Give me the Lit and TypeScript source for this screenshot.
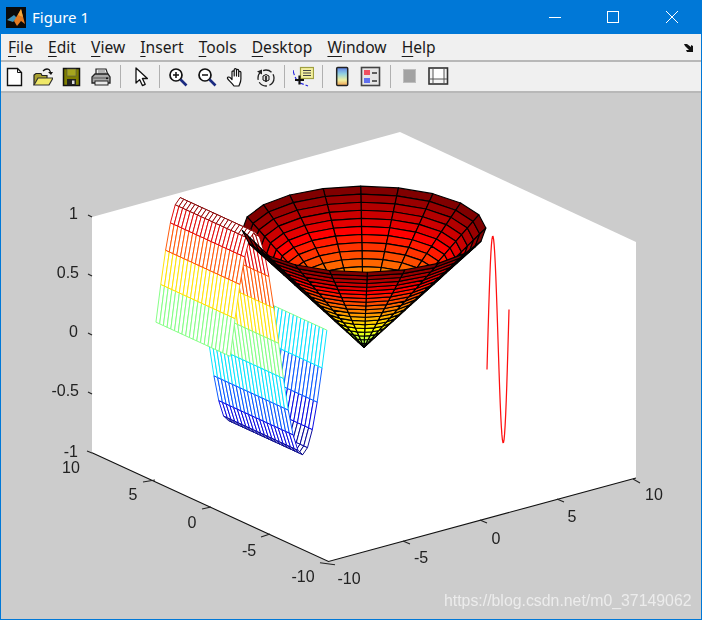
import { LitElement, html, css, svg } from "lit";
import { customElement } from "lit/decorators.js";

type V = [number, number, number];
const px = (v: V): [number, number] => [
  364 + 15.375 * v[0] - 11.825 * v[1],
  347.2 - 4.175 * v[0] - 5.44 * v[1] - 118 * v[2],
];
const depth = (v: V) => 18.1 * (0.61 * v[0] + 0.793 * v[1]) - 45.4 * v[2];
const clamp = (n: number) => Math.max(0, Math.min(1, n));
const jet = (z: number) => {
  const t = (z + 1) / 2;
  const r = clamp(Math.min(4 * t - 1.5, -4 * t + 4.5));
  const g = clamp(Math.min(4 * t - 0.5, -4 * t + 3.5));
  const b = clamp(Math.min(4 * t + 0.5, -4 * t + 2.5));
  return `rgb(${Math.round(r * 255)},${Math.round(g * 255)},${Math.round(b * 255)})`;
};
const pts = (vs: V[]) => vs.map((v) => px(v).map((n) => n.toFixed(2)).join(",")).join(" ");

interface Facet { d: number; t: unknown }
const N = 20;
const TAU = Math.PI * 2;

function buildFacets(): Facet[] {
  const out: Facet[] = [];
  // cone: z = r / 2pi
  const c = (i: number, j: number): V => {
    const r = (TAU * i) / N;
    const a = (TAU * j) / N;
    return [r * Math.cos(a), r * Math.sin(a), r / TAU];
  };
  for (let i = 0; i < N; i++) {
    for (let j = 0; j < N; j++) {
      const q: V[] = [c(i, j), c(i + 1, j), c(i + 1, j + 1), c(i, j + 1)];
      const d = q.reduce((s, v) => s + depth(v), 0) / 4;
      out.push({ d, t: svg`<polygon class="cone" points=${pts(q)} fill=${jet((i + 1) / N)}></polygon>` });
    }
  }
  // wave mesh: z = sin(x), x in [-2pi, 0], y in [pi, 3pi]
  const w = (i: number, j: number): V => {
    const x = -TAU + (TAU * i) / N;
    const y = Math.PI + (TAU * j) / N;
    return [x, y, Math.sin(x)];
  };
  for (let i = 0; i < N; i++) {
    for (let j = 0; j < N; j++) {
      const a = w(i, j), b = w(i + 1, j), e = w(i + 1, j + 1), f = w(i, j + 1);
      const d = [a, b, e, f].reduce((s, v) => s + depth(v), 0) / 4;
      out.push({
        d,
        t: svg`<polygon class="web" points=${pts([a, b, e, f])}></polygon>
          <polyline class="wire" points=${pts([a, b])} stroke=${jet(a[2])}></polyline>
          <polyline class="wire" points=${pts([f, e])} stroke=${jet(f[2])}></polyline>
          <polyline class="wire" points=${pts([a, f])} stroke=${jet(a[2])}></polyline>
          <polyline class="wire" points=${pts([b, e])} stroke=${jet(b[2])}></polyline>`,
      });
    }
  }
  return out.sort((p, q) => q.d - p.d);
}

const sinePoints = () => {
  const o: string[] = [];
  for (let k = 0; k <= 40; k++) {
    const t = (TAU * k) / 40;
    o.push(`${(487 + (22 * t) / TAU).toFixed(2)},${(369.5 - (60 * t) / TAU - 118 * Math.sin(t)).toFixed(2)}`);
  }
  return o.join(" ");
};

const facets = buildFacets();

const labels: [number, number, string, string][] = [
  [78, 219, "1", "end"], [79, 278, "0.5", "end"], [78, 337, "0", "end"], [79, 396, "-0.5", "end"], [78, 457, "-1", "end"],
  [71, 473, "10", "middle"], [133, 500, "5", "middle"], [192, 528, "0", "middle"], [249, 556, "-5", "middle"], [303, 582, "-10", "middle"],
  [349, 584, "-10", "middle"], [421, 563, "-5", "middle"], [496, 544, "0", "middle"], [572, 522, "5", "middle"], [654, 500, "10", "middle"],
];
const ticks: [number, number, number, number][] = [
  [88, 215, 92, 217], [88, 274, 92, 276], [88, 333, 92, 335], [88, 392, 92, 394], [87, 451, 92, 453],
  [143, 482, 155, 480], [202, 509, 211, 507], [261, 537, 270, 534], [320, 562.7, 335, 564.7],
  [403, 541, 410, 544], [480, 520, 487, 523], [557, 499, 564, 502], [633, 479, 640, 483],
];

const icons: Record<string, unknown> = {
  newf: svg`<path d="M4.5 2.5h10l4 4V19.5H4.5z" fill="#fff" stroke="#111" stroke-width="1.4"/><path d="M14.5 2.5v4h4" fill="none" stroke="#111"/>`,
  open: svg`<path d="M2 19V9l2-1.5h5l1 2h5v3" fill="#a8a030" stroke="#222" stroke-width="1.2"/><path d="M2 19l4-7h15l-4 7z" fill="#f0e868" stroke="#333" stroke-width="1.2"/><path d="M11 5q3-3 6-1.5l1.5 2.5" fill="none" stroke="#111" stroke-width="1.3"/><path d="M16 6h5l-2 3z" fill="#111"/>`,
  save: svg`<rect x="2.5" y="2.5" width="16" height="17" fill="#7f7f00" stroke="#111" stroke-width="1.5"/><rect x="6" y="3" width="9" height="7" fill="#a6a61e" stroke="#555" stroke-width=".6"/><rect x="6" y="13" width="9" height="6.4" fill="#222"/><rect x="11" y="14.5" width="2.5" height="3.5" fill="#ddd"/>`,
  print: svg`<path d="M6 9V3h10l2 6z" fill="#eee" stroke="#222" stroke-width="1.2"/><path d="M8 5h7M8 7h8" stroke="#777"/><path d="M2 11l3-3h13l2 3v6H2z" fill="#a8a8a8" stroke="#222" stroke-width="1.3"/><rect x="5" y="15" width="13" height="4" fill="#e8e8e8" stroke="#222"/><path d="M3 12h16" stroke="#555"/><rect x="16" y="11.5" width="2" height="1.6" fill="#111"/>`,
  arrow: svg`<path d="M7 2V17l3.6-3.4 2.8 6 2.8-1.3-2.8-5.8h5z" fill="#fff" stroke="#111" stroke-width="1.3" stroke-linejoin="round"/>`,
  zin: svg`<circle cx="8" cy="9" r="6" fill="#fff" stroke="#111" stroke-width="1.7"/><path d="M5 9h6M8 6v6" stroke="#111" stroke-width="1.5"/><path d="M12.5 13.5l6 6" stroke="#1a2a80" stroke-width="2.6"/>`,
  zout: svg`<circle cx="8" cy="9" r="6" fill="#fff" stroke="#111" stroke-width="1.7"/><path d="M5 9h6" stroke="#111" stroke-width="1.5"/><path d="M12.5 13.5l6 6" stroke="#1a2a80" stroke-width="2.6"/>`,
  hand: svg`<path d="M8 20C6 17 2 14 1.5 12.5c-.5-1.5 1.500-2 2.700-.8L6 13.500V6c0-1.600 2.200-1.600 2.200 0v4V3.800c0-1.600 2.300-1.600 2.300 0V10V4.500c0-1.600 2.200-1.600 2.200 0V10.500V6.500c0-1.500 2.200-1.500 2.200 0V13c0 3-1 4.500-2 7z" fill="#fff" stroke="#111" stroke-width="1.2" stroke-linejoin="round"/>`,
  rot: svg`<circle cx="11" cy="12" r="8" fill="none" stroke="#222" stroke-width="1.3" stroke-dasharray="9 2.500"/><path d="M2 5.500l5-2v5z" fill="#222"/><path d="M8 10l3-1.500 3 1.500v4l-3 1.500-3-1.500z" fill="#ddd" stroke="#111"/><path d="M11 10v5.500" stroke="#111" stroke-width="1.6"/>`,
  cursor: svg`<path d="M0 4q2 10 7 13l8 3" fill="none" stroke="#2020e0" stroke-width="1.1" stroke-dasharray="5 2"/><rect x="7.500" y="1.500" width="13" height="11" fill="#f4f0a0" stroke="#a0a040" stroke-width="1.2"/><path d="M10 4.500h8M10 7h8M10 9.500h8" stroke="#444" stroke-width="1.100"/><path d="M2 14h9M6.500 9.500v9" stroke="#111" stroke-width="2.200"/>`,
  cbar: svg`<defs><linearGradient id="cb" x1="0" y1="0" x2="0" y2="1"><stop offset="0" stop-color="#5f7fe8"/><stop offset=".35" stop-color="#90d0e0"/><stop offset=".7" stop-color="#f0f0a0"/><stop offset="1" stop-color="#f0a050"/></linearGradient></defs><rect x="5.700" y="1.500" width="11" height="18" rx="1" fill="url(#cb)" stroke="#222" stroke-width="1.500"/>`,
  legend: svg`<rect x="1.500" y="1.500" width="18" height="18" fill="#e6e6e6" stroke="#444" stroke-width="1.600"/><rect x="4" y="4" width="6" height="5" fill="#f05060"/><rect x="4" y="12" width="6" height="5" fill="#6070f0"/><path d="M12 7h5M12 15h5" stroke="#333" stroke-width="1.400"/>`,
  hide: svg`<rect x="4.500" y="3.500" width="12" height="13" fill="#a2a2a2" stroke="#bdbdbd"/>`,
  tools: svg`<rect x="1" y="2" width="18.500" height="16" fill="#f4f4f4" stroke="#333" stroke-width="1.600"/><rect x="5" y="3" width="11" height="10" fill="#fff"/><path d="M5 3v14M16 3v14M2 13h17" stroke="#555"/>`,
};

@customElement("app-root")
export class AppRoot extends LitElement {
  static styles = css`
    :host { display: block; width: 702px; height: 620px; }
    .window {
      width: 702px; height: 620px; box-sizing: border-box;
      border: 1px solid #0078d7; border-top: 0;
      display: flex; flex-direction: column; background: #f0f0f0; overflow: hidden;
    }
    .title {
      height: 34px; flex: none; background: #0078d7; color: #fff;
      display: flex; align-items: center; font: 15px "Noto Sans", sans-serif;
      padding-left: 5px;
    }
    .logo { width: 20px; height: 21px; margin-right: 6px; flex: none; }
    .name { flex: 1; }
    .wbtn { width: 58.5px; height: 34px; display: flex; align-items: center; justify-content: center; }
    .wbtn svg { width: 14px; height: 14px; }
    .menu {
      height: 26px; flex: none; display: flex; align-items: center;
      padding: 0 7px; gap: 15.1px; font: 15.6px "Noto Sans", sans-serif; color: #1a1a1a;
      border-bottom: 2px solid #b8b8b8;
    }
    .menu u { text-underline-offset: 3px; text-decoration-thickness: 1px; }
    .spring { flex: 1; }
    .dock { width: 10px; height: 9px; margin-top: 1px; }
    .tools {
      height: 29px; flex: none; display: flex; align-items: center;
      margin-left: -2px; border-bottom: 2px solid #b8b8b8;
    }
    .btn { width: 29px; display: flex; justify-content: center; flex: none; }
    .btn svg { width: 21px; height: 22px; display: block; filter: blur(0.25px); }
    .sep { height: 23px; flex: none; display: flex; justify-content: center; }
    .sep::after { content: ""; width: 1px; background: #b0b0b0; }
    .s10 { width: 10px; } .s9 { width: 9px; }
    .plot { flex: 1; background: #cccccc; min-height: 0; }
    .plot svg { display: block; width: 700px; height: 526px; filter: blur(0.35px); }
    .cone { stroke: #000; stroke-width: 1.15; stroke-linejoin: round; }
    .web { fill: #fff; stroke: none; }
    .wire { fill: none; stroke-width: 0.95; }
    .sine { fill: none; stroke: #ff1010; stroke-width: 1.25; }
    .axis { stroke: #111; stroke-width: 1.1; fill: none; }
    .tick { stroke: #222; stroke-width: 1.1; }
    .lab { font: 16px "Liberation Sans", Arial, sans-serif; fill: #222; }
    .mark { font: 15.85px "Liberation Sans", Arial, sans-serif; fill: #ececec; }
  `;

  private ic(name: string) {
    return html`<div class="btn"><svg viewBox="0 0 21 22">${icons[name]}</svg></div>`;
  }

  render() {
    const menu = ["File", "Edit", "View", "Insert", "Tools", "Desktop", "Window", "Help"];
    return html`<div class="window">
      <div class="title">
        <svg class="logo" viewBox="0 0 20 21">
          <rect width="20" height="21" fill="#0a0a0a"></rect>
          <path d="M1 13L8 8l3 3-4 4z" fill="#3f93bb"></path>
          <path d="M8 14L15 2l4 15-4-3-4 5z" fill="#e27a22"></path>
          <path d="M12 8l3-6 2 8z" fill="#f2a83c"></path>
        </svg>
        <span class="name">Figure 1</span>
        <div class="wbtn"><svg viewBox="0 0 14 14"><path d="M1 7.500h12" stroke="#fff" fill="none"></path></svg></div>
        <div class="wbtn"><svg viewBox="0 0 14 14"><rect x="1.500" y="1.500" width="11" height="11" stroke="#fff" fill="none"></rect></svg></div>
        <div class="wbtn"><svg viewBox="0 0 14 14"><path d="M1 1l12 12M13 1L1 13" stroke="#fff" fill="none"></path></svg></div>
      </div>
      <div class="menu">
        ${menu.map((m) => html`<span><u>${m[0]}</u>${m.slice(1)}</span>`)}
        <span class="spring"></span>
        <svg class="dock" viewBox="0 0 10 9"><path d="M0 1h3l4 3V2l2 1v6H3L2 7h3L1 3z" fill="#111"></path></svg>
      </div>
      <div class="tools">
        ${this.ic("newf")}${this.ic("open")}${this.ic("save")}${this.ic("print")}
        <div class="sep s10"></div>
        ${this.ic("arrow")}
        <div class="sep s10"></div>
        ${this.ic("zin")}${this.ic("zout")}${this.ic("hand")}${this.ic("rot")}
        <div class="sep s9"></div>
        ${this.ic("cursor")}
        <div class="sep s9"></div>
        ${this.ic("cbar")}${this.ic("legend")}
        <div class="sep s10"></div>
        ${this.ic("hide")}${this.ic("tools")}
      </div>
      <div class="plot">
        <svg viewBox="1 93 700 526">
          <polygon points="92,217 400,132 636,242 636,478 328.500,561.500 92,452.700" fill="#fff"></polygon>
          <polyline class="axis" points="92,452.700 328.500,561.500 636,478"></polyline>
          ${ticks.map((t) => svg`<line class="tick" x1=${t[0]} y1=${t[1]} x2=${t[2]} y2=${t[3]}></line>`)}
          ${facets.map((f) => f.t)}
          <polyline class="sine" points=${sinePoints()}></polyline>
          ${labels.map((l) => svg`<text class="lab" x=${l[0]} y=${l[1]} text-anchor=${l[3]}>${l[2]}</text>`)}
          <text class="mark" x="444" y="606">https://blog.csdn.net/m0_37149062</text>
        </svg>
      </div>
    </div>`;
  }
}
